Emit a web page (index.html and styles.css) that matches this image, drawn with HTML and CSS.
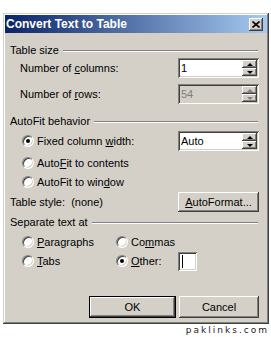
FILE: index.html
```html
<!DOCTYPE html>
<html lang="en">
<head>
    <meta charset="UTF-8">
    <title>Convert Text to Table</title>
    <link rel="stylesheet" href="styles.css">
</head>
<body>
<div class="dialog">
    <div class="titlebar">
        <span class="title">Convert Text to Table</span>
        <span class="close">
            <svg width="8" height="7" viewBox="0 0 8 7"><path d="M0.5 0.5L7.5 6.5M7.5 0.5L0.5 6.5" stroke="#000" stroke-width="1.6" fill="none"/></svg>
        </span>
    </div>
    <div class="body">
        <div class="group-title"><span>Table size</span><i class="rule"></i></div>
        <div class="field first">
            <label>Number of <u>c</u>olumns:</label>
            <div class="spin">
                <span class="spin-value">1</span>
                <span class="spin-btns"><b class="up"></b><b class="down"></b></span>
            </div>
        </div>
        <div class="field second">
            <label>Number of <u>r</u>ows:</label>
            <div class="spin disabled">
                <span class="spin-value">54</span>
                <span class="spin-btns"><b class="up"></b><b class="down"></b></span>
            </div>
        </div>

        <div class="group-title gap"><span>AutoFit behavior</span><i class="rule"></i></div>
        <div class="field radio-row fixed">
            <label class="option"><span class="radio checked"></span><span>Fixed column <u>w</u>idth:</span></label>
            <div class="spin">
                <span class="spin-value">Auto</span>
                <span class="spin-btns"><b class="up"></b><b class="down"></b></span>
            </div>
        </div>
        <div class="radio-row plain contents">
            <label class="option"><span class="radio"></span><span>Auto<u>F</u>it to contents</span></label>
        </div>
        <div class="radio-row plain">
            <label class="option"><span class="radio"></span><span>AutoFit to win<u>d</u>ow</span></label>
        </div>
        <div class="style-row">
            <span>Table style:&nbsp; (none)</span>
            <button class="btn auto"><u>A</u>utoFormat...</button>
        </div>

        <div class="group-title sep"><span>Separate text at</span><i class="rule"></i></div>
        <div class="sep-grid">
            <label class="option"><span class="radio"></span><span><u>P</u>aragraphs</span></label>
            <label class="option"><span class="radio"></span><span>Co<u>m</u>mas</span></label>
            <span></span>
            <label class="option"><span class="radio"></span><span><u>T</u>abs</span></label>
            <label class="option"><span class="radio checked"></span><span><u>O</u>ther:</span></label>
            <span class="other-box"><i class="caret"></i></span>
        </div>

        <div class="actions">
            <button class="btn default">OK</button>
            <button class="btn cancel">Cancel</button>
        </div>
    </div>
</div>
<div class="watermark">paklinks.com</div>
</body>
</html>
```

FILE: styles.css
```css
body {
    margin: 0;
    background: #fff;
    font-family: "Liberation Sans", Arial, sans-serif;
    font-size: 11px;
    color: #000;
}
.dialog {
    box-sizing: border-box;
    width: 266px;
    height: 311px;
    margin: 13px 0 0 3px;
    padding: 2px;
    background: #d4d0c8;
    box-shadow: inset -1px -1px #404040, inset 1px 1px #d4d0c8,
                inset -2px -2px #808080, inset 2px 2px #fff;
    display: flex;
    flex-direction: column;
}
.titlebar {
    height: 18px;
    flex-shrink: 0;
    display: flex;
    align-items: center;
    justify-content: space-between;
    padding: 0 4px 0 1px;
    background: linear-gradient(to right, #0a246a, #a6caf0);
    color: #fff;
    font-weight: bold;
    font-size: 12px;
}
.close {
    box-sizing: border-box;
    width: 14px;
    height: 13px;
    display: flex;
    align-items: center;
    justify-content: center;
    background: #d4d0c8;
    box-shadow: inset -1px -1px #404040, inset 1px 1px #fff,
                inset -2px -2px #808080;
}
.body {
    flex: 1;
    display: flex;
    flex-direction: column;
    padding: 10px 8px 4px 5px;
}
.group-title {
    height: 14px;
    display: flex;
    align-items: center;
}
.group-title.gap {
    margin-top: 10px;
}
.group-title.sep {
    margin-top: 3px;
}
.rule {
    flex: 1;
    height: 0;
    margin: 1px 1px 0 4px;
    border-top: 1px solid #808080;
    border-bottom: 1px solid #fff;
}
.field {
    height: 20px;
    display: flex;
    align-items: center;
    justify-content: space-between;
    padding-left: 10px;
}
.field.first {
    margin-top: 1px;
}
.field.second {
    margin-top: 6px;
}
.radio-row {
    padding-left: 12px;
}
.radio-row.fixed {
    margin-top: 3px;
}
.radio-row.plain {
    height: 19px;
    display: flex;
    align-items: center;
}
.radio-row.contents {
    margin-top: 2px;
}
.option {
    display: flex;
    align-items: center;
    gap: 3px;
}
.radio {
    box-sizing: border-box;
    width: 12px;
    height: 12px;
    border-radius: 50%;
    background: #fff;
    border: 1px solid;
    border-color: #808080 #fff #fff #808080;
    box-shadow: inset 1px 1px #404040, inset -1px -1px #d4d0c8;
    position: relative;
}
.radio.checked::after {
    content: "";
    position: absolute;
    left: 3px;
    top: 3px;
    width: 4px;
    height: 4px;
    border-radius: 50%;
    background: #000;
}
.spin {
    box-sizing: border-box;
    width: 81px;
    height: 20px;
    padding: 2px;
    display: flex;
    background: #fff;
    box-shadow: inset 1px 1px #808080, inset -1px -1px #fff,
                inset 2px 2px #404040, inset -2px -2px #d4d0c8;
}
.spin.disabled {
    background: #d4d0c8;
    color: #808080;
}
.spin-value {
    flex: 1;
    padding-left: 1px;
    line-height: 16px;
}
.spin-btns {
    width: 15px;
    display: flex;
    flex-direction: column;
}
.spin-btns b {
    flex: 1;
    display: flex;
    align-items: center;
    justify-content: center;
    background: #d4d0c8;
    box-shadow: inset -1px -1px #404040, inset 1px 1px #fff,
                inset -2px -2px #808080;
}
.spin-btns b::after {
    content: "";
    width: 0;
    height: 0;
    border-left: 3px solid transparent;
    border-right: 3px solid transparent;
}
.spin-btns .up::after {
    border-bottom: 3px solid #000;
}
.spin-btns .down::after {
    border-top: 3px solid #000;
}
.spin.disabled .up::after {
    border-bottom-color: #808080;
}
.spin.disabled .down::after {
    border-top-color: #808080;
}
.style-row {
    height: 20px;
    margin-top: 1px;
    display: flex;
    align-items: center;
    justify-content: space-between;
}
.btn {
    box-sizing: border-box;
    height: 22px;
    padding: 0;
    border: none;
    background: #d4d0c8;
    font: inherit;
    color: #000;
    box-shadow: inset -1px -1px #404040, inset 1px 1px #fff,
                inset -2px -2px #808080, inset 2px 2px #d4d0c8;
}
.btn.auto {
    width: 81px;
    height: 20px;
}
.sep-grid {
    display: grid;
    grid-template-columns: 94px 62px auto;
    grid-template-rows: 18px 20px;
    align-items: center;
    margin-top: 4px;
    padding-left: 12px;
}
.other-box {
    box-sizing: border-box;
    width: 19px;
    height: 19px;
    background: #fff;
    box-shadow: inset 1px 1px #808080, inset -1px -1px #fff,
                inset 2px 2px #404040, inset -2px -2px #d4d0c8;
    display: flex;
    align-items: center;
    padding-left: 4px;
}
.caret {
    width: 1px;
    height: 13px;
    background: #000;
}
.actions {
    margin-top: auto;
    display: flex;
    justify-content: flex-end;
    gap: 3px;
}
.btn.default {
    width: 87px;
    border: 1px solid #000;
}
.btn.cancel {
    width: 80px;
}
.watermark {
    width: 269px;
    text-align: right;
    font-family: "DejaVu Sans", sans-serif;
    font-size: 9px;
    letter-spacing: 2px;
    line-height: 13px;
    color: #222;
}
```
